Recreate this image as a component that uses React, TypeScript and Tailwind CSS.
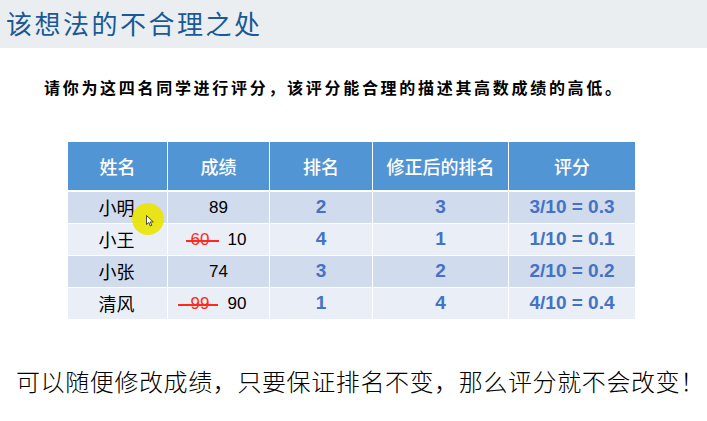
import React from "react";

const cjk = { fontFamily: '"Noto Sans CJK SC", "Noto Sans", sans-serif' };
const num = { fontFamily: '"Liberation Sans", "Noto Sans CJK SC", sans-serif' };

type Row = {
  name: string;
  old?: string;
  score: string;
  rank: string;
  fixed: string;
  grade: string;
};

const rows: Row[] = [
  { name: "小明", score: "89", rank: "2", fixed: "3", grade: "3/10 = 0.3" },
  { name: "小王", old: "60", score: "10", rank: "4", fixed: "1", grade: "1/10 = 0.1" },
  { name: "小张", score: "74", rank: "3", fixed: "2", grade: "2/10 = 0.2" },
  { name: "清风", old: "99", score: "90", rank: "1", fixed: "4", grade: "4/10 = 0.4" },
];

const headers = ["姓名", "成绩", "排名", "修正后的排名", "评分"];

function Struck({ value, wide }: { value: string; wide?: boolean }) {
  return (
    <span className="relative inline-block text-[#ff2a1a]">
      {value}
      <span
        className={
          "absolute top-[52%] h-[1.5px] bg-[#ff2a1a] " +
          (wide ? "-left-[13px] -right-[8px]" : "-left-[5px] -right-[9px]")
        }
      />
    </span>
  );
}

export default function App() {
  return (
    <div className="relative w-[707px] h-[421px] bg-white overflow-hidden">
      <div className="h-[48px] bg-[#eaeef1] flex items-center pl-[6px]">
        <span
          className="text-[26px] tracking-[2.5px] font-normal text-[#1a5896] leading-none -mt-[2px]"
          style={cjk}
        >
          该想法的不合理之处
        </span>
      </div>

      <div className="pl-[44px] pt-[30px] h-[94px]">
        <p className="text-[16px] tracking-[2.7px] font-bold text-black leading-[18px] whitespace-nowrap" style={cjk}>
          请你为这四名同学进行评分，该评分能合理的描述其高数成绩的高低。
        </p>
      </div>

      <div className="ml-[68px] w-[567px] flex flex-col">
        <div className="grid grid-cols-[99px_101px_102px_135px_126px] gap-x-[1px] bg-white">
          {headers.map((h) => (
            <div
              key={h}
              className="h-[48px] bg-[#5295d4] flex items-center justify-center text-white text-[18px] font-medium"
              style={cjk}
            >
              {h}
            </div>
          ))}
        </div>
        <div className="mt-[2px] flex flex-col gap-y-[1px]">
          {rows.map((r, i) => (
            <div
              key={r.name}
              className="grid grid-cols-[99px_101px_102px_135px_126px] gap-x-[1px] h-[31px]"
            >
              {[0, 1, 2, 3, 4].map((c) => (
                <div
                  key={c}
                  className={
                    "flex items-center justify-center " +
                    (i % 2 === 0 ? "bg-[#d0dbee]" : "bg-[#e9eef7]")
                  }
                >
                  {c === 0 && (
                    <span className="text-[18px] text-black pr-[2px]" style={cjk}>
                      {r.name}
                    </span>
                  )}
                  {c === 1 && (
                    <span className="text-[17px] text-black flex items-center" style={num}>
                      {r.old && <Struck value={r.old} wide={r.old === "99"} />}
                      <span className={r.old ? "ml-[18px]" : ""}>{r.score}</span>
                    </span>
                  )}
                  {c === 2 && (
                    <span className="text-[19px] font-bold text-[#4472c4]" style={num}>
                      {r.rank}
                    </span>
                  )}
                  {c === 3 && (
                    <span className="text-[19px] font-bold text-[#4472c4]" style={num}>
                      {r.fixed}
                    </span>
                  )}
                  {c === 4 && (
                    <span className="text-[19px] font-bold text-[#4472c4]" style={num}>
                      {r.grade}
                    </span>
                  )}
                </div>
              ))}
            </div>
          ))}
        </div>
      </div>

      <div className="pl-[16px] pt-[48px]">
        <p className="text-[24px] tracking-[0.6px] font-light text-black leading-[28px] whitespace-nowrap" style={cjk}>
          可以随便修改成绩，只要保证排名不变，那么评分就不会改变！
        </p>
      </div>

      {/* pointer highlight */}
      <div className="absolute left-[132px] top-[203px] w-[32px] h-[32px] rounded-full bg-[#ebe400]/90" />
      <svg className="absolute left-[146px] top-[215px]" width="8" height="12" viewBox="0 0 8 12">
        <path d="M0.5 0.5 L0.5 9.5 L2.8 7.4 L4.3 11 L5.8 10.4 L4.3 6.9 L7.3 6.9 Z" fill="#fff" stroke="#222" strokeWidth="0.8" />
      </svg>
    </div>
  );
}
